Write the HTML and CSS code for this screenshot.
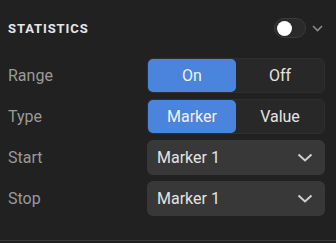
FILE: index.html
```html
<!DOCTYPE html>
<html>
<head>
<meta charset="utf-8">
<link rel="stylesheet" href="styles.css">
</head>
<body>
<div class="panel">
  <div class="header">
    <span class="title">STATISTICS</span>
    <div class="header-controls">
      <div class="toggle"><div class="knob"></div></div>
      <svg class="hchev" width="11" height="7" viewBox="0 0 11 7"><path d="M1 1 L5.5 5.5 L10 1" fill="none" stroke="#8a8a8a" stroke-width="1.6"/></svg>
    </div>
  </div>
  <div class="rows">
    <div class="row">
      <span class="label">Range</span>
      <div class="seg">
        <div class="seg-btn active">On</div>
        <div class="seg-btn">Off</div>
      </div>
    </div>
    <div class="row">
      <span class="label">Type</span>
      <div class="seg">
        <div class="seg-btn active">Marker</div>
        <div class="seg-btn">Value</div>
      </div>
    </div>
    <div class="row">
      <span class="label">Start</span>
      <div class="select">
        <span>Marker 1</span>
        <svg width="16" height="9" viewBox="0 0 16 9"><path d="M1.5 1.5 L8 7.5 L14.5 1.5" fill="none" stroke="#cfcfcf" stroke-width="2"/></svg>
      </div>
    </div>
    <div class="row">
      <span class="label">Stop</span>
      <div class="select">
        <span>Marker 1</span>
        <svg width="16" height="9" viewBox="0 0 16 9"><path d="M1.5 1.5 L8 7.5 L14.5 1.5" fill="none" stroke="#cfcfcf" stroke-width="2"/></svg>
      </div>
    </div>
  </div>
</div>
</body>
</html>
```

FILE: styles.css
```css
html, body {
  margin: 0;
  padding: 0;
  background: #212121;
  font-family: Roboto, "Liberation Sans", sans-serif;
}
.panel {
  width: 336px;
  padding: 0 11px 24px 8px;
  box-sizing: border-box;
  border-bottom: 1px solid #3a3a3a;
}
.header {
  height: 58px;
  display: flex;
  align-items: center;
  justify-content: space-between;
  padding-bottom: 2px;
  box-sizing: border-box;
}
.title {
  color: #e6e6e6;
  font-weight: 700;
  font-size: 13px;
  letter-spacing: 0.9px;
}
.header-controls {
  display: flex;
  align-items: center;
  gap: 6px;
  margin-right: 2px;
}
.toggle {
  width: 32px;
  height: 20px;
  box-sizing: border-box;
  border: 1px solid #3a3a3a;
  background: #2a2a2a;
  border-radius: 10px;
  display: flex;
  align-items: center;
  padding-left: 2px;
}
.knob {
  width: 15px;
  height: 15px;
  border-radius: 50%;
  background: #ffffff;
}
.hchev {
  display: block;
}
.rows {
  display: flex;
  flex-direction: column;
  gap: 6px;
}
.row {
  height: 35px;
  display: flex;
  align-items: center;
  justify-content: space-between;
}
.label {
  color: #9a9a9a;
  font-size: 16px;
}
.seg {
  width: 178px;
  height: 35px;
  box-sizing: border-box;
  border: 1px solid #2f2f2f;
  background: #282828;
  border-radius: 6px;
  display: flex;
}
.seg-btn {
  flex: 1;
  display: flex;
  align-items: center;
  justify-content: center;
  color: #e4e4e4;
  font-size: 16px;
  border-radius: 5px;
}
.seg-btn.active {
  background: #4a84dc;
  color: #f2f2f2;
}
.select {
  width: 178px;
  height: 35px;
  box-sizing: border-box;
  background: #383838;
  border-radius: 6px;
  display: flex;
  align-items: center;
  justify-content: space-between;
  padding: 0 12px 0 10px;
  color: #e4e4e4;
  font-size: 16px;
}
.select svg {
  display: block;
}
```
